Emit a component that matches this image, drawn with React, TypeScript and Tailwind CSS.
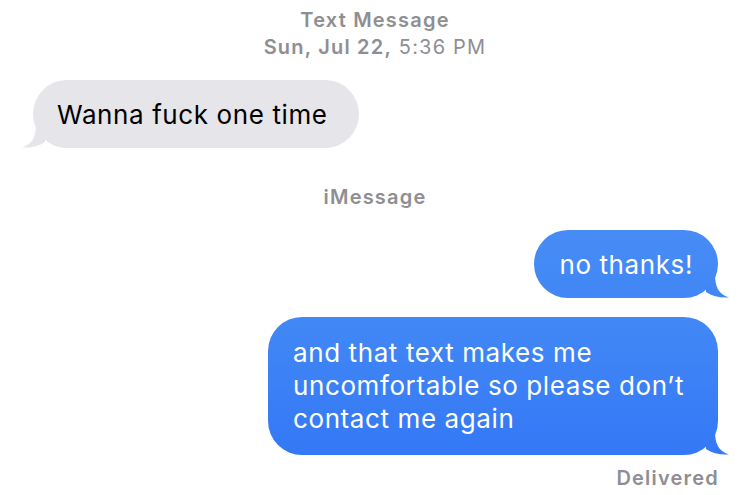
export default function App() {
  return (
    <div className="w-[750px] h-[495px] bg-white overflow-hidden flex flex-col font-['Inter',sans-serif]">
      {/* header */}
      <div className="pt-[7px] text-center text-[20px] leading-[27px] tracking-[1.2px] text-[#8e8e93]">
        <div className="font-semibold">Text Message</div>
        <div>
          <span className="font-semibold">Sun, Jul 22,</span> 5:36 PM
        </div>
      </div>

      {/* incoming */}
      <div className="mt-[19px] pl-[33px] flex">
        <div className="relative">
          <svg className="absolute left-[-12px] bottom-0" width="24" height="24" viewBox="0 0 24 24">
            <path d="M24 0 L15 0 C15 12 12 20 1 23.5 C10 24 18 22 24 18 Z" fill="#e5e5ea" />
          </svg>
          <div className="relative h-[68px] flex items-center pl-[24px] pr-[31px] rounded-[34px] bg-[#e5e5ea] text-[26px] tracking-[0.6px] text-black">
            Wanna fuck one time
          </div>
        </div>
      </div>

      <div className="mt-[36px] text-center text-[20px] leading-[27px] tracking-[1.2px] font-semibold text-[#8e8e93]">iMessage</div>

      {/* outgoing */}
      <div className="mt-[19px] pr-[32px] flex flex-col items-end gap-[19px]">
        <div className="relative">
          <svg className="absolute right-[-12px] bottom-0" width="24" height="24" viewBox="0 0 24 24">
            <path d="M0 0 L9 0 C9 12 12 20 23 23.5 C14 24 6 22 0 18 Z" fill="#4086f5" />
          </svg>
          <div className="relative h-[68px] flex items-center px-[25px] rounded-[34px] bg-gradient-to-b from-[#478cf5] to-[#4187f5] text-[26px] tracking-[0.6px] text-white">
            no thanks!
          </div>
        </div>
        <div className="relative">
          <svg className="absolute right-[-12px] bottom-0" width="24" height="24" viewBox="0 0 24 24">
            <path d="M0 0 L9 0 C9 12 12 20 23 23.5 C14 24 6 22 0 18 Z" fill="#3579f5" />
          </svg>
          <div className="relative w-[450px] pt-[19px] pb-[20px] px-[25px] rounded-[34px] bg-gradient-to-b from-[#4388f5] to-[#3478f5] text-[26px] leading-[33px] tracking-[0.6px] text-white">
            <div>and that text makes me</div>
            <div>uncomfortable so please don’t</div>
            <div>contact me again</div>
          </div>
        </div>
      </div>

      <div className="mt-[10px] pr-[31px] text-right text-[20px] leading-[27px] tracking-[1.2px] font-semibold text-[#8e8e93]">Delivered</div>
    </div>
  );
}
